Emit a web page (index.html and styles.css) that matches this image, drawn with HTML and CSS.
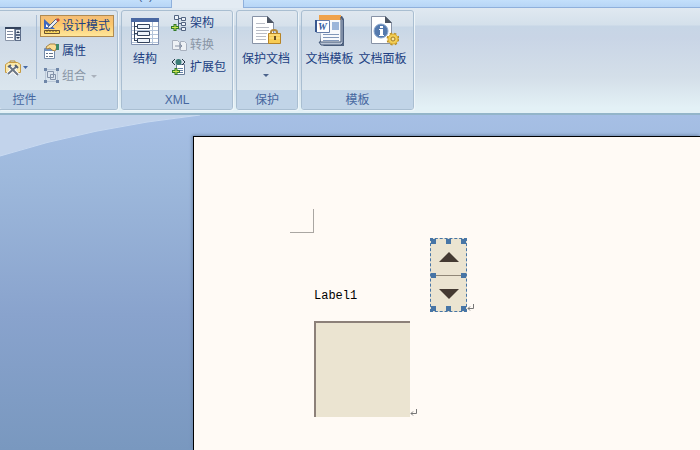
FILE: index.html
```html
<!DOCTYPE html>
<html lang="zh-CN">
    <head>
        <meta charset="utf-8">
        <title>Label1</title>
        <link rel="stylesheet" href="styles.css">
    </head>
    <body>
        <nav class="tabs">
            <div class="tabs-before"><a href="#addins">(L)</a></div>
            <div class="tab-active"></div>
            <div class="tabs-after"></div>
        </nav>
        <header class="ribbon">
            <section class="group controls">
                <div class="group-body">
                    <div class="tools">
                        <button class="tool" aria-label="控件列表">
                            <svg width="16" height="16" viewBox="0 0 16 16">
                                <path d="M0.500 1.500h9v13h-9z" fill="#fff" stroke="#8995a8"/>
                                <path d="M0 1h16v2H0z" fill="#34435c"/>
                                <path d="M2 5.500h6M2 8.500h6M2 11.500h6" stroke="#7f8ba0"/>
                                <path d="M10 3h6v12h-6z" fill="#5c6c88"/>
                                <path d="M11 4h4v4h-4zM11 10h4v4h-4z" fill="#e5ebf2"/>
                                <path d="M11 7l2-2 2 2zM11 11l2 2 2-2z" fill="#26344d"/>
                            </svg>
                        </button>
                        <button class="tool" aria-label="旧式工具">
                            <svg width="24" height="16" viewBox="0 0 24 16">
                                <path d="M5 3V1h5v2" fill="none" stroke="#b78d35"/>
                                <path d="M.5 4.500l3-2h9l3 2v8h-15z" fill="#fbe8a8" stroke="#c79b42"/>
                                <path d="M4 6l9 9M12 6l-9 8" stroke="#fff" stroke-width="4"/>
                                <path d="M4 6l9 9M12 6l-9 8" stroke="#6c7684" stroke-width="2"/>
                                <path d="M3 7l3-2M10 5l3 3" stroke="#586271" stroke-width="2"/>
                                <path d="M18 6h5l-2.500 3z" fill="#4669a5"/>
                            </svg>
                        </button>
                    </div>
                    <div class="commands">
                        <button class="command pressed">
                            <svg width="18" height="16" viewBox="0 0 18 16">
                                <path d="M1 1v10h11z" fill="#3f67bd"/>
                                <path d="M3 6v3h3z" fill="#fff"/>
                                <path d="M5 9l8-8 3 1-8 8-3 1z" fill="#e9eef5" stroke="#566381"/>
                                <path d="M13 2l2-2 2 2-2 2z" fill="#c84b36"/>
                                <path d="M1.500 12.500h15v3h-15z" fill="#f9d75f" stroke="#695333"/>
                                <path d="M4 12v2M7 12v2M10 12v2M13 12v2" stroke="#695333"/>
                            </svg>
                            <span>设计模式</span>
                        </button>
                        <button class="command">
                            <svg width="18" height="16" viewBox="0 0 18 16">
                                <path d="M1.500 5.500h10v10h-10z" fill="#fff" stroke="#748aaa"/>
                                <path d="M2 6h9v2H2z" fill="#6f91c0"/>
                                <path d="M3 10.500h2M6 10.500h4M3 13.500h2M6 13.500h4" stroke="#65758b"/>
                                <path d="M3 4l4-3h5l2 3-2 4-3-1-2-2-3 1z" fill="#f9dc94" stroke="#a78345"/>
                                <path d="M13 1h3v6h-3z" fill="#3e8a6b"/>
                            </svg>
                            <span>属性</span>
                        </button>
                        <button class="command disabled" disabled>
                            <svg width="18" height="16" viewBox="0 0 18 16">
                                <path d="M2.500 1.500h12v12h-12z" fill="none" stroke="#9dadc3" stroke-dasharray="1 1"/>
                                <path d="M4.500 3.500h6v6h-6zM7.500 6.500h5v5h-5z" fill="#dbe4ee" stroke="#8493a9"/>
                                <path d="M1 0h3v3H1zM13 0h3v3h-3zM1 12h3v3H1zM13 12h3v3h-3z" fill="#6f86a8"/>
                            </svg>
                            <span>组合</span><i class="arrow"></i>
                        </button>
                    </div>
                </div>
                <h2>控件</h2>
            </section>
            <section class="group xml">
                <div class="group-body">
                    <button class="large">
                        <svg width="30" height="32" viewBox="0 0 30 32">
                            <path d="M1.500 3.500h27v26h-27z" fill="#fff" stroke="#8292b2"/>
                            <path d="M1 3h28v4H1z" fill="#4a68a2"/>
                            <path d="M2 11.500h26M2 15.500h26M2 19.500h26M2 23.500h26M2 27.500h26M22.500 7v22" stroke="#b4c4da"/>
                            <path d="M4.500 7v19M4 11.500h4M4 18.500h4M4 25.500h4" fill="none" stroke="#35435c"/>
                            <path d="M7.500 9.500h12v4h-12zM7.500 16.500h12v4h-12zM7.500 23.500h12v4h-12z" fill="#eef4fb" stroke="#34435d"/>
                        </svg>
                        <span>结构</span>
                    </button>
                    <div class="commands">
                        <button class="command">
                            <svg width="18" height="16" viewBox="0 0 18 16">
                                <path d="M5 3.500h5M7.500 3v11h3M7 8.500h4" fill="none" stroke="#526481"/>
                                <path d="M3.500.500h4v4h-4zM10.500 2.500h4v3h-4zM10.500 7.500h4v3h-4zM10.500 12.500h4v3h-4z" fill="#edf3fa" stroke="#526481"/>
                                <path d="M4 9v7M0 12.500h8" stroke="#327b28" stroke-width="3"/>
                                <path d="M4 10v5M1 12.500h6" stroke="#cee553"/>
                            </svg>
                            <span>架构</span>
                        </button>
                        <button class="command disabled" disabled>
                            <svg width="18" height="16" viewBox="0 0 18 16">
                                <path d="M1.500 3.500h5l2 2v7h-7zM9.500 4.500h4l2 2v7h-6z" fill="#eef1f5" stroke="#a8b0be"/>
                                <path d="M4 9h7M9 7l2 2-2 2" fill="none" stroke="#8994a7"/>
                            </svg>
                            <span>转换</span>
                        </button>
                        <button class="command">
                            <svg width="18" height="16" viewBox="0 0 18 16">
                                <path d="M5.500 5.500h8v10h-8z" fill="#fff" stroke="#687c98"/>
                                <path d="M7 9.500h5M7 11.500h5M7 13.500h5" stroke="#6682a8"/>
                                <path d="M4 0L1 3l3 3M11 0l3 3-3 3" fill="none" stroke="#263444"/>
                                <circle cx="7.500" cy="3" r="3" fill="#397b75"/>
                                <path d="M5 9v7M1 12.500h8" stroke="#327b28" stroke-width="3"/>
                                <path d="M5 10v5M2 12.500h6" stroke="#cee553"/>
                            </svg>
                            <span>扩展包</span>
                        </button>
                    </div>
                </div>
                <h2>XML</h2>
            </section>
            <section class="group protect">
                <div class="group-body">
                    <button class="large">
                        <svg width="32" height="32" viewBox="0 0 32 32">
                            <path d="M2.500 1.500h15l6 6v21h-21z" fill="#fff" stroke="#8792a6"/>
                            <path d="M17 1v7h7z" fill="#4c5563"/>
                            <path d="M6 8.500h9M6 12.500h13M6 15.500h13M6 18.500h11M6 21.500h10M6 24.500h10" stroke="#b9bdc6"/>
                            <path d="M21 20v-3q0-2 3-2t3 2v3" fill="none" stroke="#b48a3a" stroke-width="2"/>
                            <path d="M18.500 18.500h12v10h-12z" fill="#f7cc55" stroke="#b78427"/>
                            <path d="M19 20h11M19 23h11" stroke="#ffe58c"/>
                            <path d="M24 21h2v4h-2z" fill="#684f21"/>
                        </svg>
                        <span>保护文档</span><i class="arrow"></i>
                    </button>
                </div>
                <h2>保护</h2>
            </section>
            <section class="group templates">
                <div class="group-body">
                    <button class="large">
                        <svg width="32" height="32" viewBox="0 0 32 32">
                            <path d="M6 1h22l2 3v27H10l-4-3z" fill="#526582"/>
                            <path d="M5 0h22v28H7z" fill="#f7f9fc"/>
                            <path d="M5 0h22v5H5z" fill="#f0a24a"/>
                            <path d="M27 2l2 3v23l-2 2H7l-2-3h22z" fill="#b9c4d5" stroke="#405474"/>
                            <path d="M9 19.500h16M9 22.500h16M9 25.500h16" stroke="#8197b9"/>
                            <path d="M18 7h7v8h-7z" fill="#9cb6da"/>
                            <path d="M2.500 5.500h13v12h-13z" fill="#fff" stroke="#667da8"/>
                            <path d="M1 5h2v12H1z" fill="#385890"/>
                            <text x="4" y="15" class="word-mark">W</text>
                        </svg>
                        <span>文档模板</span>
                    </button>
                    <button class="large">
                        <svg width="32" height="32" viewBox="0 0 32 32">
                            <path d="M4.500 1.500h14l6 6v21h-20z" fill="#fff" stroke="#8792a6"/>
                            <path d="M18 1v7h7z" fill="#4c5563"/>
                            <circle cx="14" cy="16" r="7" fill="#5479ad" stroke="#8ba8cd"/>
                            <path d="M13 11h3v2h-3zM12 14h4v6h1v1h-5v-1h1v-5h-1z" fill="#fff"/>
                            <circle cx="26" cy="24" r="5" fill="#f3ce54" stroke="#b88c22" stroke-width="3" stroke-dasharray="2 2"/>
                            <circle cx="26" cy="24" r="5" fill="#f3ce54" stroke="#d6aa36"/>
                            <circle cx="26" cy="24" r="2" fill="#f8e6a0" stroke="#a17a25"/>
                        </svg>
                        <span>文档面板</span>
                    </button>
                </div>
                <h2>模板</h2>
            </section>
        </header>
        <main class="workspace">
            <svg class="swoosh" width="200" height="44" viewBox="0 0 200 44">
                <path d="M0 0h200Q92 12 0 41z" fill="#c2d3eb"/>
                <path d="M200 0Q92 12 0 41" fill="none" stroke="#c9daf1"/>
            </svg>
            <article class="document">
                <div class="margin-mark"></div>
                <div class="objects">
                    <div class="left-objects">
                        <p>Label1</p>
                        <div class="inline-object">
                            <div class="frame"></div>
                            <svg class="return" width="8" height="8" viewBox="0 0 8 8"><path d="M6.500 0v4.500H1M3 2.500l-2 2 2 2" fill="none" stroke="#777"/></svg>
                        </div>
                    </div>
                    <div class="inline-object">
                        <div class="spinner">
                            <button aria-label="增加"><svg width="20" height="10" viewBox="0 0 20 10"><path d="M0 10L10 0l10 10z" fill="#443a32"/></svg></button>
                            <button aria-label="减少"><svg width="20" height="10" viewBox="0 0 20 10"><path d="M0 0h20L10 10z" fill="#443a32"/></svg></button>
                            <i class="handle nw"></i><i class="handle n"></i><i class="handle ne"></i>
                            <i class="handle w"></i><i class="handle e"></i>
                            <i class="handle sw"></i><i class="handle s"></i><i class="handle se"></i>
                        </div>
                        <svg class="return" width="8" height="8" viewBox="0 0 8 8"><path d="M6.500 0v4.500H1M3 2.500l-2 2 2 2" fill="none" stroke="#777"/></svg>
                    </div>
                </div>
            </article>
        </main>
    </body>
</html>
```
FILE: styles.css
```css
* {
    box-sizing: border-box;
}
body {
    margin: 0;
    min-height: 100vh;
    display: flex;
    flex-direction: column;
    overflow: hidden;
    font-family: "Liberation Sans", "Noto Sans CJK SC", sans-serif;
    font-size: 12px;
    color: #213f82;
}
button {
    border: 0;
    padding: 0;
    margin: 0;
    background: none;
    font: inherit;
    color: inherit;
}
svg {
    display: block;
    flex: none;
}
.tabs {
    display: flex;
    height: 8px;
    overflow: hidden;
    background: linear-gradient(#c3dffb, #b5d4f5);
}
.tabs-before {
    width: 172px;
    padding-right: 18px;
    text-align: right;
    border-bottom: 1px solid #8fb0dc;
    border-right: 1px solid #8fb0dc;
}
.tabs a {
    display: block;
    margin-top: -12px;
    line-height: 14px;
    text-decoration: none;
    color: #45618f;
}
.tab-active {
    width: 71px;
    background: #e3ebf3;
}
.tabs-after {
    flex: 1;
    border-bottom: 1px solid #8fb0dc;
    border-left: 1px solid #8fb0dc;
}
.ribbon {
    display: flex;
    gap: 3px;
    height: 107px;
    padding: 2px 0 3px;
    background: linear-gradient(#e0e9f1, #d4e0eb 17px, #c7d6e6 18px, #c9d5e6 30px, #d4dfe9 70px, #e3f1f6 100px);
    border-bottom: 2px solid #93b5c9;
}
.group {
    display: flex;
    flex-direction: column;
    border: 1px solid #a9bed1;
    border-radius: 3px;
    background: linear-gradient(#dfe7ef, #d6e1eb 15px, #c8d7e6 16px, #cfdae7 30px, #dbe6ee 80px);
    box-shadow: 1px 1px 0 #eef5f9;
}
.controls {
    width: 118px;
    border-left: 0;
    border-radius: 0 3px 3px 0;
}
.xml {
    width: 112px;
}
.protect {
    width: 62px;
}
.templates {
    width: 113px;
}
.group-body {
    display: flex;
    flex: 1;
    padding-top: 4px;
}
.group h2 {
    margin: 0;
    height: 19px;
    line-height: 21px;
    font-size: 12px;
    font-weight: normal;
    text-align: center;
    color: #46679f;
    background: #c1d4e7;
    border-radius: 0 0 2px 2px;
}
.controls h2 {
    padding-right: 68px;
}
.tools {
    display: flex;
    flex-direction: column;
    gap: 18px;
    width: 37px;
    height: 64px;
    padding: 11px 0 0 5px;
    border-right: 1px solid #a9bdd4;
}
.commands {
    display: flex;
    flex-direction: column;
    gap: 3px;
}
.controls .commands {
    padding-left: 3px;
}
.command {
    display: flex;
    align-items: center;
    gap: 1px;
    height: 22px;
    padding: 0 3px;
    line-height: 20px;
    white-space: nowrap;
}
.controls .command {
    width: 74px;
}
.xml .commands {
    gap: 0;
    margin-top: -3px;
}
.pressed {
    border: 1px solid #b08b52;
    padding: 0 2px;
    background: linear-gradient(#f4bd76, #fbc66b 40%, #ffe79b);
}
.disabled {
    color: #8995a5;
}
.arrow {
    border: 3px solid transparent;
    border-top-color: #4b638c;
    border-bottom: 0;
}
.command .arrow {
    margin-left: 4px;
}
.disabled .arrow {
    border-top-color: #aab1bc;
}
.large {
    display: flex;
    flex-direction: column;
    align-items: center;
    width: 53px;
    white-space: nowrap;
    line-height: 24px;
}
.xml .large {
    width: 46px;
}
.protect .large {
    width: 58px;
}
.large .arrow {
    margin-top: 3px;
}
.templates .group-body {
    padding-left: 1px;
}
.word-mark {
    font: italic bold 10px "Liberation Serif", serif;
    fill: #355da0;
}
.workspace {
    position: relative;
    flex: 1;
    padding: 21px 0 0 193px;
    display: flex;
    background: linear-gradient(#a6bfe5, #9eb9dc 60px, #89a3cd 200px, #7998bf);
}
.swoosh {
    position: absolute;
    top: 0;
    left: 0;
}
.document {
    position: relative;
    flex: 1;
    padding: 72px 0 0 96px;
    background: #fffaf5;
    border: solid #000;
    border-width: 1px 0 0 1px;
    box-shadow: -1px -1px 3px #7089ac;
}
.margin-mark {
    width: 24px;
    height: 24px;
    border: solid #aaa6a2;
    border-width: 0 1px 1px 0;
}
.objects {
    display: flex;
    align-items: flex-start;
    gap: 12px;
    padding: 5px 0 0 24px;
}
.left-objects {
    padding-top: 50px;
}
.left-objects p {
    margin: 0 0 17px;
    font: 12px/16px "Liberation Mono", monospace;
    color: #000;
}
.inline-object {
    display: flex;
    align-items: flex-end;
}
.frame {
    width: 96px;
    height: 96px;
    background: #ebe4d1;
    border: solid #8c8079;
    border-width: 2px 0 0 2px;
}
.spinner {
    position: relative;
    width: 37px;
    height: 74px;
    border: 1px dashed #4775a6;
    background: #ebe4d1;
}
.spinner button {
    display: flex;
    align-items: center;
    justify-content: center;
    width: 100%;
    height: 36px;
}
.spinner button + button {
    border-top: 1px solid #908777;
}
.handle {
    position: absolute;
    width: 5px;
    height: 5px;
    background: #4775a6;
}
.nw, .n, .ne { top: 0; }
.w, .e { top: 34px; }
.sw, .s, .se { bottom: 0; }
.nw, .w, .sw { left: 0; }
.n, .s { left: 15px; }
.ne, .e, .se { right: 0; }
```
